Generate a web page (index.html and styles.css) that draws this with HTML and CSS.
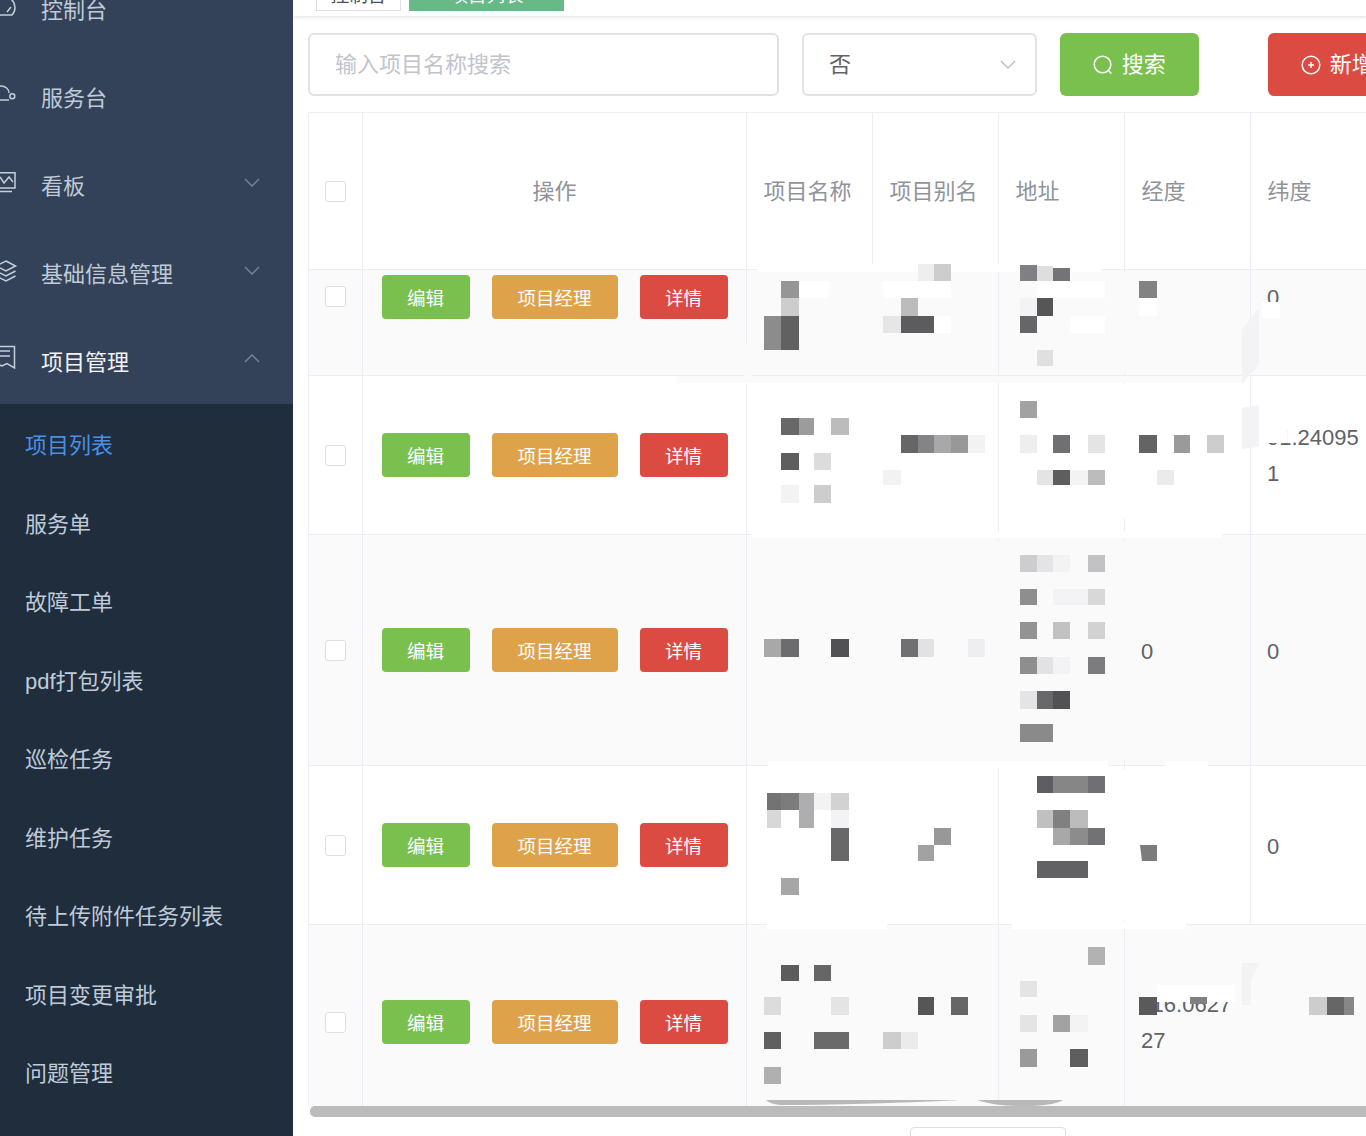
FILE: index.html
```html
<!DOCTYPE html>
<html lang="zh-CN">
<head>
<meta charset="utf-8">
<title>项目列表</title>
<link rel="stylesheet" href="styles.css">
</head>
<body>
<div class="page">
  <aside class="sidebar">
    <div class="menu-item">
      <svg class="menu-icon" viewBox="0 0 24 24"><path d="M20 19H4a11 11 0 1 1 16 0zM15 16l4-5"/></svg>
      <span class="menu-label">控制台</span>
    </div>
    <div class="menu-item">
      <svg class="menu-icon" viewBox="0 0 24 24"><path d="M1 9a8 7 0 0 1 16 0M1 16h16"/><circle cx="20.300" cy="12.300" r="2.500"/></svg>
      <span class="menu-label">服务台</span>
    </div>
    <div class="menu-item">
      <svg class="menu-icon" viewBox="0 0 24 24"><path d="M1 .750h22V16H1zM8 5l4 6 5-6 4 5M1 19.500h19"/></svg>
      <span class="menu-label">看板</span>
      <svg class="chev" viewBox="0 0 16 9"><path d="M1 1l7 7 7-7"/></svg>
    </div>
    <div class="menu-item">
      <svg class="menu-icon" viewBox="0 0 24 24"><path d="M14 1l9.500 5L14 11 4 6zM4 11l10 5 9.500-5M4 16l10 5 9.500-5"/></svg>
      <span class="menu-label">基础信息管理</span>
      <svg class="chev" viewBox="0 0 16 9"><path d="M1 1l7 7 7-7"/></svg>
    </div>
    <div class="menu-item menu-item-open">
      <svg class="menu-icon" viewBox="0 0 24 24"><path d="M1-1.500h21.500V20L15 15.500 10 18 1 14M1 3h17M1 8h17"/></svg>
      <span class="menu-label">项目管理</span>
      <svg class="chev" viewBox="0 0 16 9"><path d="M1 8l7-7 7 7"/></svg>
    </div>
    <nav class="submenu">
      <div class="sub-item sub-item-active">项目列表</div>
      <div class="sub-item">服务单</div>
      <div class="sub-item">故障工单</div>
      <div class="sub-item">pdf打包列表</div>
      <div class="sub-item">巡检任务</div>
      <div class="sub-item">维护任务</div>
      <div class="sub-item">待上传附件任务列表</div>
      <div class="sub-item">项目变更审批</div>
      <div class="sub-item">问题管理</div>
    </nav>
  </aside>

  <main class="main">
    <div class="topbar">
      <span class="tag">控制台</span>
      <span class="tag tag-active">项目列表</span>
    </div>

    <div class="search-row">
      <div class="field field-input">输入项目名称搜索</div>
      <div class="field field-select">
        <span class="lift">否</span>
        <svg class="select-chev" viewBox="0 0 16 9"><path d="M1 1l7 7 7-7"/></svg>
      </div>
      <div class="action action-search">
        <svg class="action-icon" viewBox="0 0 20 20"><circle cx="9.500" cy="9.500" r="8.300"/><path d="M15.500 15.500l3 3"/></svg>
        <span class="lift">搜索</span>
      </div>
      <div class="action action-add">
        <svg class="action-icon" viewBox="0 0 20 20"><circle cx="10" cy="10" r="8.800"/><path d="M10 7v6M7 10h6"/></svg>
        <span class="lift">新增</span>
      </div>
    </div>

    <div class="table">
      <div class="row head">
        <div class="cell cell-check"><i class="checkbox"></i></div>
        <div class="cell cell-center">操作</div>
        <div class="cell cell-title">项目名称</div>
        <div class="cell cell-title">项目别名</div>
        <div class="cell cell-title">地址</div>
        <div class="cell cell-title">经度</div>
        <div class="cell cell-title">纬度</div>
      </div>
      <div class="body">
        <div class="row stripe row-a first">
          <div class="cell cell-check"><i class="checkbox"></i></div>
          <div class="cell cell-ops"><span class="btn btn-edit">编辑</span><span class="btn btn-pm">项目经理</span><span class="btn btn-info">详情</span></div>
          <div class="cell cell-name"></div><div class="cell"></div><div class="cell"></div><div class="cell"></div>
          <div class="cell cell-value">0</div>
        </div>
        <div class="row row-a">
          <div class="cell cell-check"><i class="checkbox"></i></div>
          <div class="cell cell-ops"><span class="btn btn-edit">编辑</span><span class="btn btn-pm">项目经理</span><span class="btn btn-info">详情</span></div>
          <div class="cell cell-name"></div><div class="cell"></div><div class="cell"></div><div class="cell"></div>
          <div class="cell cell-num">91.24095<br>1</div>
        </div>
        <div class="row stripe row-b">
          <div class="cell cell-check"><i class="checkbox"></i></div>
          <div class="cell cell-ops"><span class="btn btn-edit">编辑</span><span class="btn btn-pm">项目经理</span><span class="btn btn-info">详情</span></div>
          <div class="cell cell-name"></div><div class="cell"></div><div class="cell"></div>
          <div class="cell cell-value">0</div>
          <div class="cell cell-value">0</div>
        </div>
        <div class="row row-a">
          <div class="cell cell-check"><i class="checkbox"></i></div>
          <div class="cell cell-ops"><span class="btn btn-edit">编辑</span><span class="btn btn-pm">项目经理</span><span class="btn btn-info">详情</span></div>
          <div class="cell cell-name"></div><div class="cell"></div><div class="cell"></div><div class="cell"></div>
          <div class="cell cell-value">0</div>
        </div>
        <div class="row stripe row-c">
          <div class="cell cell-check"><i class="checkbox"></i></div>
          <div class="cell cell-ops"><span class="btn btn-edit">编辑</span><span class="btn btn-pm">项目经理</span><span class="btn btn-info">详情</span></div>
          <div class="cell cell-name"></div><div class="cell"></div><div class="cell"></div>
          <div class="cell cell-num">116.0627<br>27</div>
          <div class="cell"></div>
        </div>
      </div>
    </div>
    <div class="scrollbar"></div>
    <div class="pager-box"></div>
  </main>

  <svg class="mosaic" viewBox="0 0 1366 1136" aria-hidden="true">
    <!-- pale smudges that hide cell text and rules -->
    <g fill="#fff">
      <rect x="757" y="264" width="345" height="8"/>
      <rect x="799" y="281" width="30" height="17"/>
      <rect x="883" y="281" width="68" height="17"/>
      <rect x="918" y="316" width="33" height="17"/>
      <rect x="1037" y="281" width="68" height="17"/>
      <rect x="1070" y="316" width="35" height="17"/>
      <rect x="1139" y="298" width="18" height="18"/>
      <rect x="1262" y="302" width="18" height="16"/>
      <rect x="752" y="532" width="470" height="6"/>
      <rect x="1262" y="425" width="25" height="18"/>
      <rect x="768" y="761" width="340" height="7"/>
      <rect x="1165" y="761" width="43" height="7"/>
      <rect x="767" y="921" width="120" height="8"/>
      <rect x="1012" y="921" width="174" height="8"/>
      <rect x="1157" y="985" width="78" height="17"/>
    </g>
    <g fill="#fafafb">
      <rect x="677" y="376" width="565" height="7"/>
      <rect x="744" y="345" width="8" height="31"/>
      <rect x="995" y="540" width="10" height="220"/>
      <rect x="1120" y="272" width="10" height="100"/>
      <rect x="1120" y="540" width="10" height="220"/>
      <rect x="1242" y="997" width="18" height="18"/>
    </g>
    <g fill="#fff">
      <rect x="1120" y="384" width="10" height="135"/>
      <rect x="1120" y="770" width="10" height="150"/>
    </g>
    <g fill="#f3f3f5">
      <path d="M1242 330l17-22v57l-17 19z"/>
      <path d="M1242 408l17-3v42l-17 2z"/>
      <path d="M1242 963h17l-8 17v25h-9z"/>
      <rect x="1020" y="298" width="17" height="18"/>
      <rect x="781" y="485" width="18" height="18"/>
      <rect x="1053" y="555" width="17" height="17"/>
      <rect x="1053" y="589" width="35" height="16"/>
      <rect x="1053" y="657" width="17" height="17"/>
      <rect x="1070" y="470" width="18" height="15"/>
      <rect x="814" y="793" width="17" height="17"/>
      <rect x="831" y="810" width="18" height="18"/>
      <rect x="1070" y="1015" width="18" height="17"/>
    </g>

    <!-- row 1 -->
    <rect x="781" y="281" width="18" height="17" fill="#969696"/>
    <rect x="781" y="298" width="18" height="18" fill="#cdcdcd"/>
    <rect x="764" y="316" width="17" height="34" fill="#8c8c8c"/>
    <rect x="781" y="316" width="18" height="34" fill="#616161"/>
    <rect x="918" y="264" width="16" height="17" fill="#eeeef2"/>
    <rect x="934" y="264" width="17" height="17" fill="#cdcdd0"/>
    <rect x="901" y="298" width="17" height="18" fill="#bcbcbc"/>
    <rect x="883" y="316" width="18" height="17" fill="#e6e6e8"/>
    <rect x="901" y="316" width="33" height="17" fill="#5c5c5e"/>
    <rect x="1020" y="265" width="17" height="16" fill="#808084"/>
    <rect x="1037" y="266" width="16" height="15" fill="#dedee0"/>
    <rect x="1053" y="268" width="17" height="13" fill="#747478"/>
    <rect x="1037" y="298" width="16" height="18" fill="#565658"/>
    <rect x="1020" y="316" width="17" height="17" fill="#666668"/>
    <rect x="1037" y="350" width="16" height="16" fill="#e0e0e0"/>
    <rect x="1139" y="281" width="18" height="17" fill="#828282"/>

    <!-- row 2 -->
    <rect x="781" y="418" width="18" height="17" fill="#686868"/>
    <rect x="799" y="418" width="15" height="17" fill="#9c9c9c"/>
    <rect x="831" y="418" width="18" height="17" fill="#bcbcbc"/>
    <rect x="781" y="453" width="18" height="17" fill="#5e5e5e"/>
    <rect x="814" y="453" width="17" height="17" fill="#dcdcdc"/>
    <rect x="814" y="485" width="17" height="18" fill="#cdcdcd"/>
    <rect x="901" y="435" width="17" height="18" fill="#666668"/>
    <rect x="918" y="435" width="16" height="18" fill="#848486"/>
    <rect x="934" y="435" width="17" height="18" fill="#a8a8aa"/>
    <rect x="951" y="435" width="17" height="18" fill="#989898"/>
    <rect x="968" y="435" width="17" height="18" fill="#f2f2f4"/>
    <rect x="883" y="470" width="18" height="15" fill="#f2f2f2"/>
    <rect x="1020" y="401" width="17" height="17" fill="#a2a2a2"/>
    <rect x="1020" y="435" width="17" height="18" fill="#eeeeee"/>
    <rect x="1053" y="435" width="17" height="18" fill="#707072"/>
    <rect x="1088" y="435" width="17" height="18" fill="#e4e4e4"/>
    <rect x="1037" y="470" width="16" height="15" fill="#e4e4e6"/>
    <rect x="1053" y="470" width="17" height="15" fill="#5e5e60"/>
    <rect x="1088" y="470" width="17" height="15" fill="#bcbcbe"/>
    <rect x="1139" y="435" width="18" height="18" fill="#646466"/>
    <rect x="1174" y="435" width="16" height="18" fill="#9a9a9a"/>
    <rect x="1207" y="435" width="17" height="18" fill="#cdcdcd"/>
    <rect x="1157" y="470" width="17" height="15" fill="#ebebeb"/>

    <!-- row 3 -->
    <rect x="764" y="639" width="17" height="18" fill="#a8a8a8"/>
    <rect x="781" y="639" width="18" height="18" fill="#6c6c6e"/>
    <rect x="831" y="639" width="18" height="18" fill="#525254"/>
    <rect x="901" y="639" width="17" height="18" fill="#707072"/>
    <rect x="918" y="639" width="16" height="18" fill="#e2e2e4"/>
    <rect x="968" y="639" width="17" height="18" fill="#eeeef0"/>
    <rect x="1020" y="555" width="17" height="17" fill="#cdcdcf"/>
    <rect x="1037" y="555" width="16" height="17" fill="#e4e4e6"/>
    <rect x="1088" y="555" width="17" height="17" fill="#c2c2c4"/>
    <rect x="1020" y="589" width="17" height="16" fill="#8e8e8e"/>
    <rect x="1088" y="589" width="17" height="16" fill="#d8d8d8"/>
    <rect x="1020" y="622" width="17" height="17" fill="#939393"/>
    <rect x="1053" y="622" width="17" height="17" fill="#c2c2c2"/>
    <rect x="1088" y="622" width="17" height="17" fill="#d2d2d2"/>
    <rect x="1020" y="657" width="17" height="17" fill="#8e8e8e"/>
    <rect x="1037" y="657" width="16" height="17" fill="#e2e2e4"/>
    <rect x="1088" y="657" width="17" height="17" fill="#7c7c7e"/>
    <rect x="1020" y="691" width="17" height="18" fill="#e4e4e6"/>
    <rect x="1037" y="691" width="16" height="18" fill="#68686a"/>
    <rect x="1053" y="691" width="17" height="18" fill="#525254"/>
    <rect x="1020" y="724" width="33" height="18" fill="#8a8a8a"/>

    <!-- row 4 -->
    <rect x="767" y="793" width="14" height="17" fill="#737373"/>
    <rect x="781" y="793" width="18" height="17" fill="#7c7c7c"/>
    <rect x="799" y="793" width="15" height="17" fill="#aeaeb0"/>
    <rect x="831" y="793" width="18" height="17" fill="#d2d2d2"/>
    <rect x="767" y="810" width="14" height="18" fill="#d8d8da"/>
    <rect x="799" y="810" width="15" height="18" fill="#aeaeb0"/>
    <rect x="831" y="828" width="18" height="33" fill="#686868"/>
    <rect x="781" y="878" width="18" height="17" fill="#a6a6a6"/>
    <rect x="934" y="828" width="17" height="17" fill="#989898"/>
    <rect x="918" y="845" width="16" height="16" fill="#a2a2a2"/>
    <rect x="1037" y="776" width="16" height="17" fill="#5e5e62"/>
    <rect x="1053" y="776" width="35" height="17" fill="#868688"/>
    <rect x="1088" y="776" width="17" height="17" fill="#707074"/>
    <rect x="1037" y="810" width="16" height="18" fill="#c0c0c2"/>
    <rect x="1053" y="810" width="17" height="18" fill="#808080"/>
    <rect x="1070" y="810" width="18" height="18" fill="#bcbcbc"/>
    <rect x="1053" y="828" width="17" height="17" fill="#a8a8a8"/>
    <rect x="1070" y="828" width="18" height="17" fill="#8c8c8c"/>
    <rect x="1088" y="828" width="17" height="17" fill="#727274"/>
    <rect x="1037" y="861" width="51" height="17" fill="#626264"/>
    <path d="M1140 845h17v16h-15z" fill="#7c7c7c"/>

    <!-- row 5 -->
    <rect x="781" y="965" width="18" height="16" fill="#5c5c5e"/>
    <rect x="814" y="965" width="17" height="16" fill="#666668"/>
    <rect x="764" y="997" width="17" height="18" fill="#dcdcdc"/>
    <rect x="831" y="997" width="18" height="18" fill="#e4e4e6"/>
    <rect x="918" y="997" width="16" height="18" fill="#565658"/>
    <rect x="951" y="997" width="17" height="18" fill="#666668"/>
    <rect x="764" y="1032" width="17" height="17" fill="#606062"/>
    <rect x="814" y="1032" width="35" height="17" fill="#6a6a6c"/>
    <rect x="883" y="1032" width="18" height="17" fill="#cdcdcd"/>
    <rect x="901" y="1032" width="17" height="17" fill="#ebebed"/>
    <rect x="764" y="1067" width="17" height="17" fill="#b0b0b0"/>
    <rect x="1088" y="947" width="17" height="18" fill="#b2b2b2"/>
    <rect x="1020" y="981" width="17" height="16" fill="#e4e4e4"/>
    <rect x="1020" y="1015" width="17" height="17" fill="#e4e4e4"/>
    <rect x="1053" y="1015" width="17" height="17" fill="#a2a2a2"/>
    <rect x="1020" y="1049" width="17" height="18" fill="#9a9a9a"/>
    <rect x="1070" y="1049" width="18" height="18" fill="#5e5e60"/>
    <rect x="1139" y="997" width="18" height="18" fill="#5a5a5c"/>
    <rect x="1190" y="997" width="17" height="7" fill="#808082"/>
    <rect x="1309" y="997" width="18" height="18" fill="#cdcdcf"/>
    <rect x="1327" y="997" width="17" height="18" fill="#666668"/>
    <rect x="1344" y="997" width="10" height="18" fill="#878789"/>
    <path d="M766 1100h194q-100 5-180 5q-10-1-14-5z" fill="#b8b8b8"/>
    <path d="M977 1100h86q-10 6-40 6q-30 0-46-6z" fill="#b8b8b8"/>
  </svg>
</div>
</body>
</html>
```

FILE: styles.css
```css
* {
  box-sizing: border-box;
}

html,
body {
  margin: 0;
  height: 100%;
}

body {
  font-family: "Liberation Sans", "Noto Sans CJK SC", sans-serif;
  font-size: 22px;
  color: #606266;
  background: #fff;
}

.page {
  position: relative;
  display: flex;
  width: 1366px;
  height: 1136px;
  overflow: hidden;
}

/* sidebar */
.sidebar {
  flex: 0 0 293px;
  margin-top: -36px;
  background: #334258;
  color: #bfcbd9;
  height: 1172px;
}

.menu-item {
  display: flex;
  align-items: center;
  height: 88px;
  padding-right: 33px;
  position: relative;
}

.menu-item-open .menu-label {
  color: #f4f4f5;
}

.menu-icon {
  flex: none;
  width: 24px;
  height: 24px;
  margin-left: -8px;
  margin-right: 25px;
  overflow: visible;
  fill: none;
  stroke: #c5cfdb;
  stroke-width: 1.500;
}

.menu-label {
  flex: 1;
}

.chev {
  flex: none;
  width: 16px;
  height: 9px;
  margin-top: -4px;
  fill: none;
  stroke: #78869a;
  stroke-width: 1.300;
}

.submenu {
  background: #1f2d3d;
  height: 732px;
}

.sub-item {
  display: flex;
  align-items: center;
  height: 78.500px;
  padding-left: 25px;
}

.sub-item-active {
  color: #4a90e6;
}

/* main */
.main {
  flex: 1;
  min-width: 0;
  overflow: hidden;
}

.topbar {
  position: relative;
  display: flex;
  align-items: flex-end;
  gap: 8px;
  height: 16px;
  padding: 0 0 5px 23px;
  background: #fff;
  box-shadow: 0 1px 4px rgba(0, 21, 41, 0.14);
  font-size: 18.500px;
}

.tag {
  flex: none;
  display: flex;
  align-items: center;
  justify-content: center;
  width: 85px;
  height: 34px;
  border: 1.500px solid #dcdfe6;
  color: #495060;
}

.tag-active {
  width: 155px;
  border-color: #67b987;
  background: #67b987;
  color: #fff;
}

.search-row {
  display: flex;
  gap: 22.500px;
  width: 1100px;
  margin: 17px 0 16px 15px;
  height: 63px;
}

.field {
  display: flex;
  align-items: center;
  padding: 0 19px 0 25px;
  border: 2px solid #e0e2e8;
  border-radius: 6px;
  background: #fff;
}

.field-input {
  flex: 0 0 471px;
  padding-bottom: 5px;
  color: #c0c4cc;
}

.field-select {
  flex: 0 0 235px;
  margin-left: 0.500px;
  justify-content: space-between;
}

.lift {
  padding-bottom: 5px;
}

.select-chev {
  width: 16px;
  height: 9px;
  fill: none;
  stroke: #b4bccc;
  stroke-width: 1.300;
}

.action {
  display: flex;
  align-items: center;
  justify-content: center;
  gap: 9px;
  flex: 0 0 139.500px;
  border-radius: 6px;
  color: #fff;
}

.action-search {
  background: #7ac04f;
}

.action-add {
  margin-left: 46px;
  background: #dc4b42;
}

.action-icon {
  flex: none;
  width: 20px;
  height: 20px;
  fill: none;
  stroke: #fff;
  stroke-width: 1.500;
}

/* table */
.table {
  width: 1200px;
  margin-left: 15px;
  border-top: 1.500px solid #ebeef5;
  border-left: 1.500px solid #ebeef5;
}

.row {
  display: grid;
  grid-template-columns: 54px 384px 126px 126px 126px 126px 250px;
  border-bottom: 1.500px solid #ebeef5;
}

.head {
  height: 157px;
  color: #909399;
}

.body {
  height: 836px;
  overflow: hidden;
}

.row-a {
  height: 159px;
}

.row-b {
  height: 231px;
}

.row-c {
  height: 194px;
  border-bottom: 0;
}

.first {
  height: 158px;
  margin-top: -52px;
}

.stripe {
  background: #fafafb;
}

.cell {
  display: flex;
  align-items: center;
  padding-left: 16px;
  border-right: 1.500px solid #ebeef5;
}

.cell-title,
.cell-center {
  padding-bottom: 4px;
}

.cell-title {
  padding-left: 16.500px;
}

.cell-value {
  padding-top: 3px;
}

.cell-name {
  border-right: 0;
}

.cell-num {
  display: block;
  align-self: center;
  padding-top: 2px;
  line-height: 36px;
  border-right: 0;
}

.cell-check {
  justify-content: center;
  padding-left: 0;
}

.cell-center {
  justify-content: center;
  padding-left: 0;
}

.cell-ops {
  gap: 22px;
  padding-left: 18.500px;
}

.checkbox {
  display: block;
  width: 21px;
  height: 21px;
  border: 1.500px solid #dcdfe6;
  border-radius: 3px;
  background: #fff;
}

.btn {
  display: flex;
  align-items: center;
  justify-content: center;
  width: 88px;
  height: 44px;
  border-radius: 4px;
  color: #fff;
  font-size: 18.500px;
}

.btn-edit {
  background: #7ac04f;
}

.btn-pm {
  width: 126px;
  background: #dea34a;
}

.btn-info {
  background: #dc4b42;
}

.scrollbar {
  width: 1100px;
  height: 11px;
  margin-left: 17px;
  border-radius: 5px 0 0 5px;
  background: #bbb;
}

.pager-box {
  width: 156px;
  height: 40px;
  margin: 10px 0 0 617px;
  border: 1.500px solid #dcdfe6;
  border-radius: 4px;
}

.mosaic {
  position: absolute;
  top: 0;
  left: 0;
  width: 1366px;
  height: 1136px;
  pointer-events: none;
}
```
